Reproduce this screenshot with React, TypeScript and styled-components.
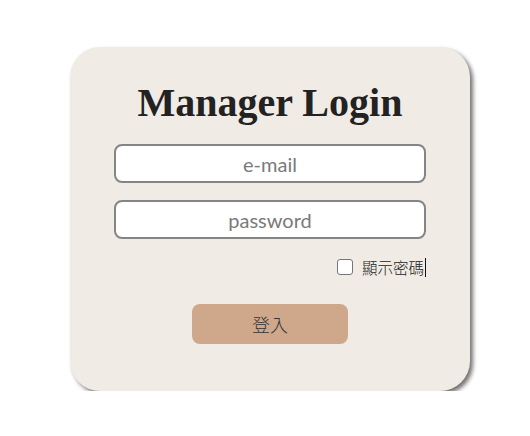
import React from "react";
import styled, { createGlobalStyle } from "styled-components";

const Global = createGlobalStyle`
  html, body { margin: 0; padding: 0; background: #ffffff; }
  * { box-sizing: border-box; }
`;

const Page = styled.div`
  padding: 47px 0 0 70px;
`;

const Card = styled.form`
  width: 400px;
  padding: 33px 44px 47px;
  background: #f0ebe5;
  border-radius: 30px;
  box-shadow: 3px 3px 4px rgba(0, 0, 0, 0.55);
  display: flex;
  flex-direction: column;
  align-items: stretch;
`;

const Title = styled.h1`
  margin: 0;
  height: 46px;
  line-height: 46px;
  text-align: center;
  font-family: "Liberation Serif", "Times New Roman", serif;
  font-weight: 700;
  font-size: 40px;
  color: #222222;
`;

const Field = styled.input<{ $gap: number }>`
  margin: ${(p) => p.$gap}px 0 0;
  height: 39px;
  width: 100%;
  border: 2px solid #858585;
  border-radius: 8px;
  background: #ffffff;
  text-align: center;
  font-family: Lato, "Noto Sans", sans-serif;
  font-size: 20px;
  color: #333;
  outline: none;
  &::placeholder { color: #7a7a7a; }
`;

const CheckRow = styled.label`
  margin-top: 18px;
  height: 20px;
  display: flex;
  align-items: center;
  justify-content: flex-end;
  gap: 9px;
  font-family: "Noto Sans CJK TC", "Noto Sans", sans-serif;
  font-size: 15.5px;
  font-weight: 300;
  color: #222;
`;

const Box = styled.input`
  appearance: none;
  margin: 0;
  width: 16px;
  height: 16px;
  border: 1px solid #767676;
  border-radius: 3px;
  background: #fff;
`;

const LabelText = styled.span`
  display: flex;
  align-items: center;
  line-height: 20px;
`;

const Caret = styled.span`
  display: inline-block;
  width: 1px;
  height: 19px;
  background: #111;
  margin-left: 1px;
`;

const Submit = styled.button`
  align-self: center;
  margin-top: 27px;
  width: 156px;
  height: 40px;
  border: none;
  border-radius: 8px;
  background: #cfa88b;
  font-family: "Noto Sans CJK TC", "Noto Sans", sans-serif;
  font-size: 18px;
  font-weight: 300;
  color: #333;
`;

export default function App() {
  return (
    <>
      <Global />
      <Page>
        <Card onSubmit={(e) => e.preventDefault()}>
          <Title>Manager Login</Title>
          <Field $gap={18} type="email" placeholder="e-mail" />
          <Field $gap={17} type="password" placeholder="password" />
          <CheckRow>
            <Box type="checkbox" />
            <LabelText>
              顯示密碼
              <Caret />
            </LabelText>
          </CheckRow>
          <Submit type="submit">登入</Submit>
        </Card>
      </Page>
    </>
  );
}
